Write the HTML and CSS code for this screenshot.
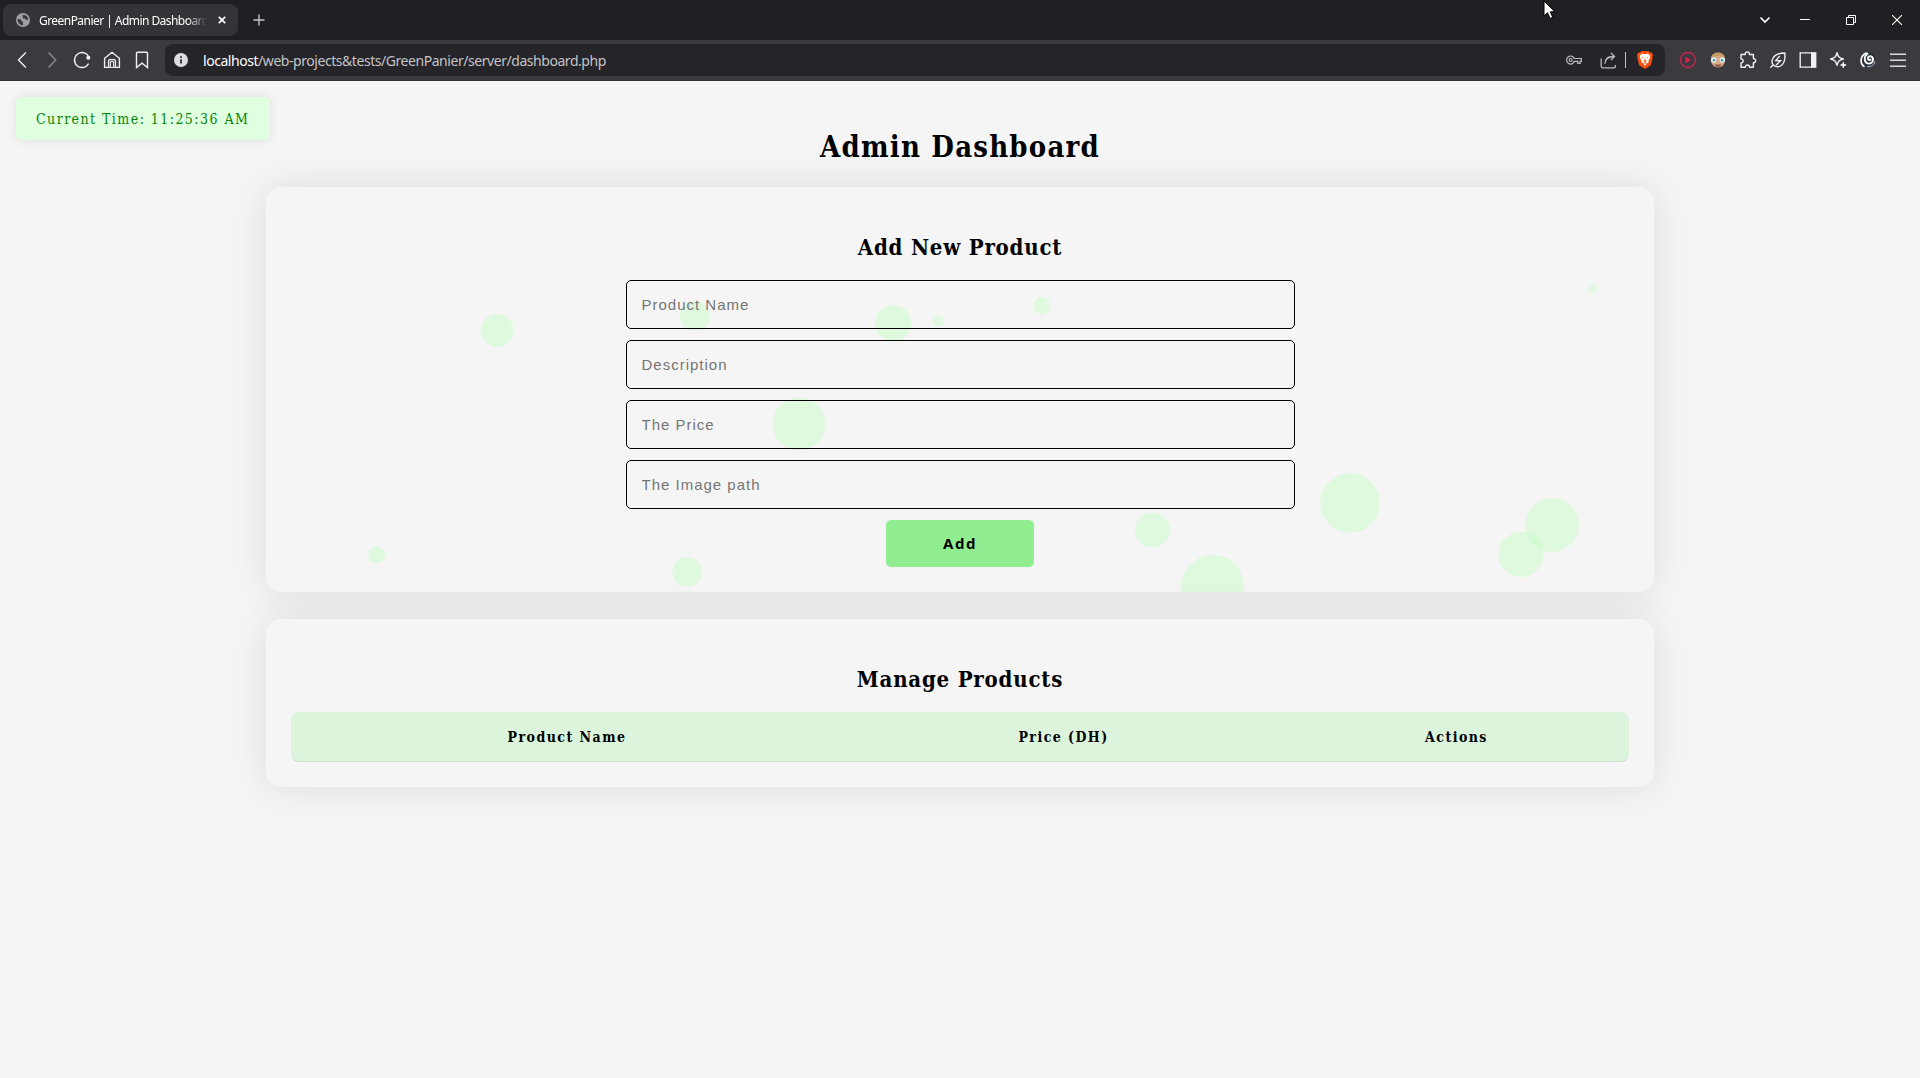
FILE: index.html
```html
<!DOCTYPE html>
<html lang="en">
<head>
<meta charset="utf-8">
<title>GreenPanier | Admin Dashboard</title>
<link rel="stylesheet" href="styles.css">
</head>
<body>
<div class="browser">
  <header class="tabs">
    <div class="tab">
      <svg class="tab-icon" width="14" height="14" viewBox="0 0 14 14"><circle cx="7" cy="7" r="7" fill="#9da1a6"/><path d="M1.6 6.2c1.8-.3 3 .2 3.6 1.2.5.9 2 .5 1.7 1.9-.2 1 .4 1.500.2 2.900-3 .2-5.500-2.300-5.500-6zM6.500 2.100c-.2 1.300.8 1.300.2 2.200-.5.9.5 1.300 1.600 1.200 1.300 0 1.200 1.500 2.300 1.500.8 0 1-.5 1.700-.5C12.200 3.500 9.500 1.400 6.500 2.100z" fill="#3a3a3e"/></svg>
      <span class="tab-title">GreenPanier | Admin Dashboard</span>
      <svg class="tab-close" width="8" height="8" viewBox="0 0 8 8"><path d="M.8.8l6.400 6.400M7.200.8L.8 7.200" stroke="#fff" stroke-width="1.700"/></svg>
    </div>
    <svg class="new-tab" width="12" height="12" viewBox="0 0 12 12"><path d="M6 .5v11M.5 6h11" stroke="#c4c4c8" stroke-width="1.400"/></svg>
    <div class="window-buttons">
      <span class="win search"><svg width="12" height="8" viewBox="0 0 12 8"><path d="M1.500 1.500L6 6l4.500-4.500" fill="none" stroke="#fff" stroke-width="1.700"/></svg></span>
      <span class="win"><svg width="10" height="10" viewBox="0 0 10 10"><path d="M0 4.500h10" stroke="#fff"/></svg></span>
      <span class="win"><svg width="10" height="10" viewBox="0 0 10 10"><path d="M.5 2.500h7v7h-7zM2.500 2.500v-2h7v7h-2" fill="none" stroke="#fff"/></svg></span>
      <span class="win"><svg width="10" height="10" viewBox="0 0 10 10"><path d="M0 0l10 10M10 0L0 10" stroke="#fff" stroke-width="1.100"/></svg></span>
    </div>
  </header>
  <nav class="toolbar">
    <span class="tool"><svg width="18" height="18" viewBox="0 0 18 18"><path d="M12.800 1.500L5.500 9l7.300 7.500" class="line"/></svg></span>
    <span class="tool dim"><svg width="18" height="18" viewBox="0 0 18 18"><path d="M5.500 1.500L12.800 9l-7.300 7.500" class="line"/></svg></span>
    <span class="tool"><svg width="18" height="18" viewBox="0 0 18 18"><path d="M15.600 12.700A7.500 7.500 0 1 1 15.900 6" class="line"/><circle cx="15.300" cy="6.800" r="2" fill="#f4f4f5"/></svg></span>
    <span class="tool"><svg width="18" height="18" viewBox="0 0 18 18"><path d="M1.600 7.300L9 1.300l7.400 6v9.100h-4V10c0-.9-.5-1.400-1.300-1.400H6.900c-.8 0-1.300.5-1.300 1.400v6.400h-4z" class="line"/><path d="M7.400 16.400v-5.800h3.200v5.800" class="line thin"/><path d="M5.600 16.400h6.800" class="line thin"/></svg></span>
    <span class="tool"><svg width="18" height="18" viewBox="0 0 18 18"><path d="M3.500 2.200q0-1 1-1h9q1 0 1 1v14.300L9 12.200l-5.500 4.300z" class="line"/></svg></span>
    <div class="address">
      <svg class="info" width="14" height="14" viewBox="0 0 14 14"><circle cx="7" cy="7" r="7" fill="#dcdce1"/><path d="M7 6.200v4.300M7 3.300v1.800" stroke="#28272c" stroke-width="1.700"/></svg>
      <span class="url"><b>localhost</b>/web-projects&amp;tests/GreenPanier/server/dashboard.php</span>
      <svg class="key" width="16" height="10" viewBox="0 0 16 10"><path d="M8.300 3.500h7v2.800h-1.200v2h-2.300v-2H8.400A4 4 0 1 1 8.300 3.500z" fill="none" stroke="#bdbdc1" stroke-width="1.200"/><circle cx="4.600" cy="5" r="1.500" fill="none" stroke="#bdbdc1" stroke-width="1.100"/></svg>
      <svg class="share" width="18" height="17" viewBox="0 0 18 17"><path d="M1.200 6.500v7.700q0 1.600 1.600 1.600h11q1.600 0 1.600-1.600V13M5 11.700c0-4.700 2.300-7.200 9-7.200M11 1l3.500 3.500L11 8" fill="none" stroke="#bdbdc1" stroke-width="1.300"/></svg>
      <i class="divider"></i>
      <svg class="brave" width="16" height="18" viewBox="0 0 16 18"><path d="M4.500 0h7l1.600 1.500 1.500-.1L16 4l-.6 1.600.3 1.200-1.900 7.500L8 18l-5.800-3.700L.3 6.800l.3-1.200L0 4l1.400-2.600 1.500.1z" fill="#fb5012"/><path d="M5 2.500l1.500.5h3l1.500-.5L13.400 5l-.5 1 .2 1-1.700 2.500.4 1.500-2.100 1.400L8 14.800l-1.700-2.400L4.200 11l.4-1.500L2.900 7l.2-1-.5-1z" fill="#fff"/><path d="M4.200 6l2 .7-.4 1zM11.800 6l-2 .7.4 1zM8 5.500l.4 3.500 1.500.9L8 11l-1.900-1.100 1.500-.9zM6 11.900l2-.7 2 .7-2 .8z" fill="#fb5012"/></svg>
    </div>
    <span class="tool"><svg width="18" height="18" viewBox="0 0 18 18"><circle cx="9" cy="9" r="7.500" fill="none" stroke="#c9244f" stroke-width="1.300"/><path d="M6.500 5.500L12 9l-5.500 3.500z" fill="#d9204f"/></svg></span>
    <span class="tool"><svg width="18" height="18" viewBox="0 0 18 18"><circle cx="9" cy="9.500" r="7" fill="#d9a982"/><path d="M2 8.500C1.500 4 5 1.500 9 1.500S16.500 4 16 8.500L13 5.600 9 4.900 5 5.600z" fill="#c99a66"/><circle cx="4.700" cy="9" r="2.800" fill="#dfeff2"/><circle cx="13.300" cy="9" r="2.800" fill="#dfeff2"/><circle cx="5" cy="9.200" r="1.200" fill="#4e93a6"/><circle cx="13" cy="9.200" r="1.200" fill="#4e93a6"/><path d="M5.500 13.500h7l-1.500 2.300h-4z" fill="#8a5a4a"/></svg></span>
    <span class="tool"><svg width="18" height="18" viewBox="0 0 18 18"><path d="M2 3.500h4.200C5.800 0 10.800 0 10.400 3.500h4V7.600c3-.3 3 4.500 0 4.200v4.500h-3.800c.2-3-4.400-3-4.200 0H2v-4.400c2.800.2 2.800-4.200 0-4z" class="line" stroke-linejoin="round"/></svg></span>
    <span class="tool"><svg width="18" height="18" viewBox="0 0 18 18"><path d="M15.800 2c.6 5.600-.3 13.500-7.300 13.700-4 0-6.200-3.200-5.300-6.500C4.300 4.500 9 2 15.800 2zM1.500 16.800l2.600-3" class="line"/><path d="M10.700 5l-3.900 4.600h4.800l-4.500 4.300" class="line"/></svg></span>
    <span class="tool"><svg width="18" height="18" viewBox="0 0 18 18"><path d="M1.200 1.900h15.500v14.200H1.200z" class="line"/><path d="M12 1.500h5v15h-5z" fill="#f0f0f3"/></svg></span>
    <span class="tool"><svg width="18" height="18" viewBox="0 0 18 18"><path d="M8 1.300c.9 4.700 2.100 5.900 6.700 6.700-4.600.9-5.800 2.100-6.700 6.700-.9-4.600-2.100-5.800-6.700-6.700C5.900 7.200 7.100 6 8 1.300z" class="line"/><path d="M14.300 11.300c.3 2 .7 2.400 2.700 2.700-2 .3-2.400.7-2.700 2.700-.3-2-.7-2.400-2.700-2.700 2-.3 2.400-.7 2.700-2.700z" fill="#fff" stroke="#fff"/></svg></span>
    <span class="tool"><svg width="18" height="18" viewBox="0 0 18 18"><circle cx="9" cy="9" r="7.800" fill="#2a2f3c"/><path d="M7.500 1.800C.5 5 .8 13 5.500 15.700" fill="none" stroke="#fff" stroke-width="1.800"/><path d="M8.500 2.500C4.500 5.500 5 12 9.500 12.600c4.200.3 6-4.600 3.300-6.800-2-1.500-4.600.2-3.700 2.300.5 1 1.700 1.100 2.300.5" fill="none" stroke="#fff" stroke-width="1.900" stroke-linecap="round"/><path d="M8 15.600c4 .6 7.200-1.600 8-5.300" fill="none" stroke="#9ba2b4" stroke-width="1.300"/></svg></span>
    <span class="tool"><svg width="18" height="18" viewBox="0 0 18 18"><path d="M1 3.200h16M1 9.200h16M1 15.200h16" stroke="#dddde0" stroke-width="1.400"/></svg></span>
  </nav>
</div>
<div class="clock">Current Time: 11:25:36 AM</div>
<main class="page">
  <h1>Admin Dashboard</h1>
  <section class="card">
    <svg class="bubbles" width="1388" height="405" viewBox="0 0 1388 405">
      <circle cx="231" cy="143.500" r="16.400"/><circle cx="429" cy="129" r="15"/><circle cx="533" cy="237" r="26.400"/>
      <circle cx="421.300" cy="385" r="15"/><circle cx="627.300" cy="136.300" r="18"/><circle class="faint" cx="672.500" cy="133.700" r="5.700"/>
      <circle cx="775.700" cy="118.700" r="8.500"/><circle cx="886.300" cy="343" r="17.600"/><circle cx="946.700" cy="399.200" r="31.200"/>
      <circle cx="1084" cy="316" r="29.800"/><circle cx="1286" cy="338" r="27"/><circle cx="1255" cy="367.300" r="22.600"/>
      <circle cx="110.700" cy="368" r="8.400"/><circle class="faint" cx="1327" cy="101.700" r="4.700"/>
    </svg>
    <h2>Add New Product</h2>
    <form class="form">
      <input type="text" placeholder="Product Name">
      <input type="text" placeholder="Description">
      <input type="text" placeholder="The Price">
      <input type="text" placeholder="The Image path">
      <button type="button">Add</button>
    </form>
  </section>
  <section class="card">
    <h2>Manage Products</h2>
    <div class="table-head">
      <span>Product Name</span><span>Price (DH)</span><span>Actions</span>
    </div>
  </section>
</main>
<svg class="pointer" width="13" height="20" viewBox="0 0 13 20"><path d="M1 1v15l3.500-3.300L7 18.500l2.800-1.200-2.500-5.500H12z" fill="#fff" stroke="#000"/></svg>
</body>
</html>
```
FILE: styles.css
```css
* { box-sizing: border-box; }
body {
  margin: 0;
  height: 1078px;
  overflow: hidden;
  background: #f5f5f5;
  color: #000;
  font-family: "DejaVu Serif Condensed", "DejaVu Serif", serif;
  font-stretch: condensed;
}
svg { display: block; flex: none; }

.browser { font-family: "Noto Sans", sans-serif; }
.tabs { display: flex; align-items: center; height: 40px; padding-left: 3px; background: #202024; }
.tab { display: flex; align-items: center; width: 235px; height: 32px; padding: 0 12px 0 13px; border-radius: 8px; background: #343338; }
.tab-title {
  width: 168px;
  margin-left: 9px;
  overflow: hidden;
  white-space: nowrap;
  color: #fff;
  font-size: 12px;
  letter-spacing: -0.55px;
  -webkit-mask-image: linear-gradient(to right, #000 148px, transparent 168px);
  mask-image: linear-gradient(to right, #000 148px, transparent 168px);
}
.tab-close { margin-left: auto; }
.new-tab { margin-left: 15px; }
.window-buttons { display: flex; margin-left: auto; }
.win { display: flex; align-items: center; justify-content: center; width: 46px; height: 40px; }
.search { width: 34px; }

.toolbar { display: flex; align-items: center; height: 41px; padding: 0 7px; background: #3b3a3f; border-bottom: 1px solid #302e34; }
.tool { display: flex; align-items: center; justify-content: center; width: 30px; height: 30px; }
.line { fill: none; stroke: #f0f0f2; stroke-width: 1.4; }
.thin { stroke-width: 1; }
.dim { opacity: 0.45; }
.address { display: flex; flex: 1; align-items: center; height: 32px; margin: 0 8px; padding: 0 12px 0 9px; border-radius: 8px; background: #252429; }
.url { margin-left: 15px; color: #c3c3c7; font-size: 14px; letter-spacing: -0.45px; white-space: nowrap; }
.url b { color: #fff; font-weight: 400; }
.key { margin-left: auto; }
.share { margin-left: 18px; }
.divider { width: 1px; height: 16px; margin: 0 11px 0 7px; background: #c0c0c4; }

.clock {
  position: absolute;
  left: 16px;
  top: 97px;
  width: 254px;
  height: 43px;
  padding-left: 20px;
  border-radius: 5px;
  background: #dfffdf;
  box-shadow: 0 0 10px rgba(0, 0, 0, 0.1);
  color: #088408;
  font-size: 14px;
  line-height: 45px;
  letter-spacing: 1.45px;
  white-space: nowrap;
}

.page { display: flex; flex-direction: column; align-items: center; padding-top: 46px; }
h1 { margin: 0 0 20px; font-size: 29px; line-height: 40px; letter-spacing: 1.2px; }
.card {
  position: relative;
  width: 1388px;
  margin-bottom: 27px;
  padding: 25px;
  border-radius: 15px;
  background: #f5f5f5;
  box-shadow: 0 0 40px rgba(0, 0, 0, 0.1);
}
.card > :not(.bubbles) { position: relative; }
.card > .bubbles { position: absolute; left: 0; top: 0; fill: rgba(190, 255, 190, 0.4); }
.faint { opacity: 0.8; }
h2 { margin: 20px 0 18px; font-size: 22px; line-height: 30px; letter-spacing: 0.8px; text-align: center; }
.form { display: flex; flex-direction: column; align-items: center; gap: 11px; }
.form input {
  width: 669px;
  height: 49px;
  padding: 0 15px;
  border: 1px solid #000;
  border-radius: 5px;
  appearance: none;
  background: transparent;
  font: 15px "Liberation Sans", sans-serif;
  letter-spacing: 1px;
}
.form input::placeholder { color: #757575; }
.form button {
  width: 148px;
  height: 47px;
  padding: 0 0 2px;
  border: 0;
  border-radius: 5px;
  background: #90ee90;
  color: #000;
  font: bold 15px "Noto Sans", sans-serif;
  letter-spacing: 1.5px;
}
.table-head {
  display: grid;
  grid-template-columns: 552px 441px 345px;
  height: 50px;
  border-bottom: 1px solid #cfd9cf;
  border-radius: 8px;
  background: #dcf4dc;
  font-size: 14px;
  font-weight: bold;
  line-height: 51px;
  letter-spacing: 1.45px;
  text-align: center;
}
.pointer { position: absolute; left: 1543px; top: 0; }
```
